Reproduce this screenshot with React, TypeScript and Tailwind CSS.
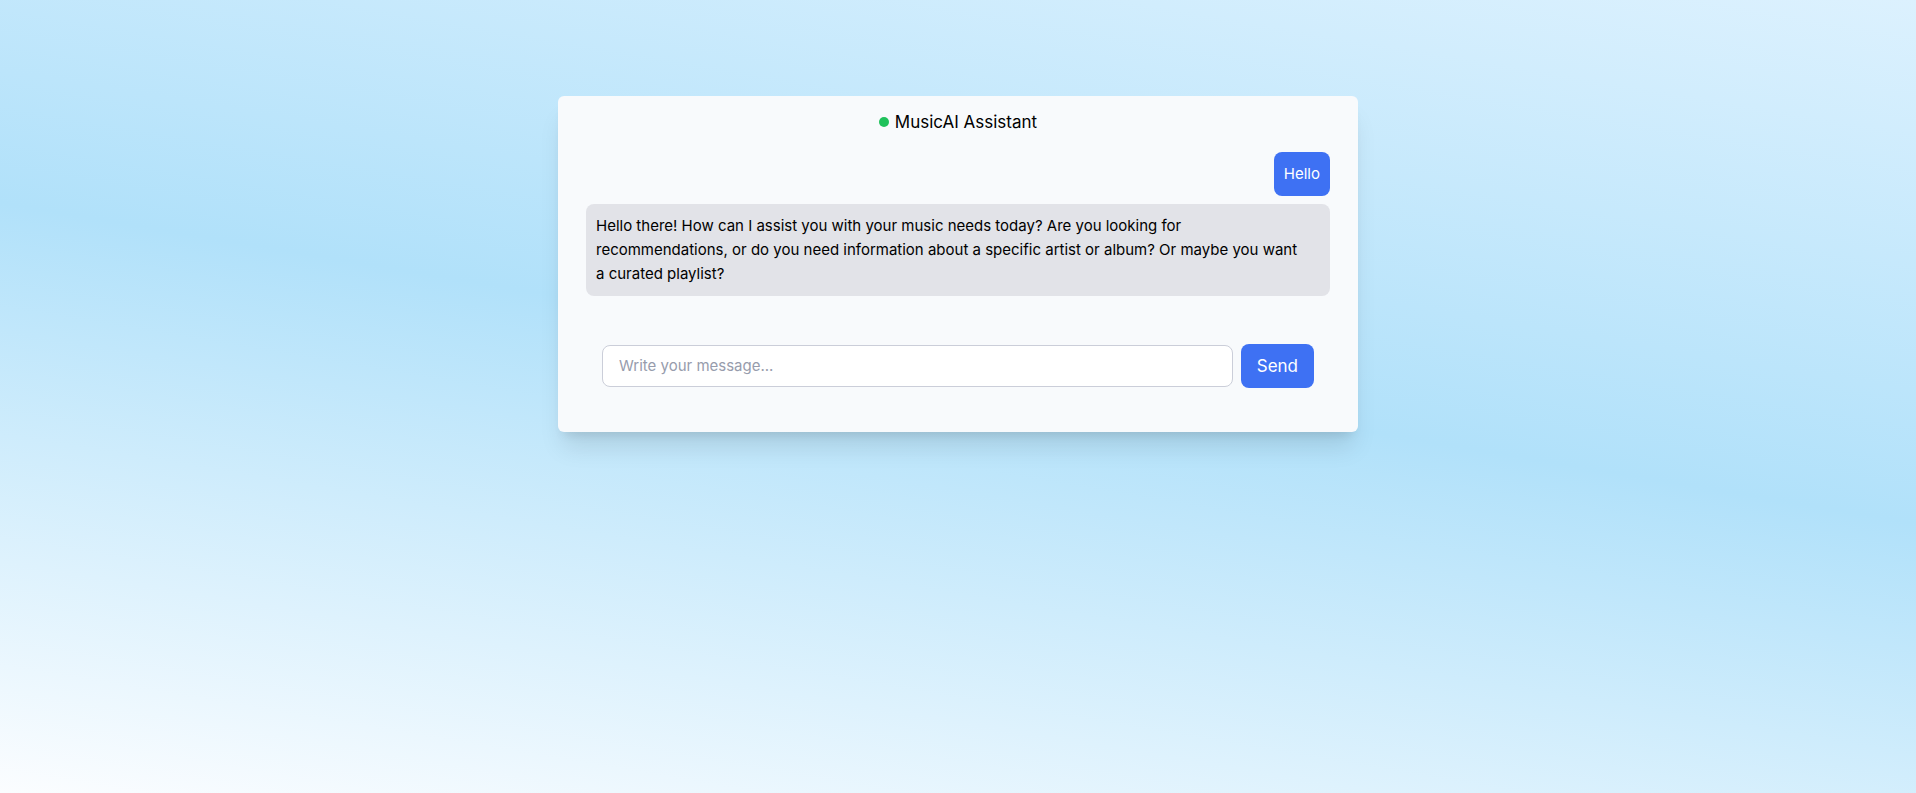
import { useState } from "react";

type Message = { from: "user" | "assistant"; text: string };

const messages: Message[] = [
  { from: "user", text: "Hello" },
  {
    from: "assistant",
    text: "Hello there! How can I assist you with your music needs today? Are you looking for recommendations, or do you need information about a specific artist or album? Or maybe you want a curated playlist?",
  },
];

function Bubble({ from, text }: Message) {
  return from === "user" ? (
    <li className="self-end rounded-lg bg-[#3e71f3] p-2.5 text-white">{text}</li>
  ) : (
    <li className="self-start rounded-lg bg-[#e2e3e8] py-2.5 pr-6 pl-2.5 text-black">{text}</li>
  );
}

export default function App() {
  const [draft, setDraft] = useState("");

  return (
    <div className="min-h-screen bg-[linear-gradient(189.5deg,#dcf1fe_0%,#b1e1fa_47%,#fbfdff_100%)] px-4 pt-24 font-['Inter',sans-serif] text-[15px] leading-6">
      <main className="mx-auto max-w-[800px] rounded-md bg-[#f8fafc] px-7 pt-3 pb-11 shadow-xl">
        <header className="flex items-center justify-center gap-1.5">
          <span className="size-2.5 rounded-full bg-[#1fc15b]" />
          <h1 className="text-[17px] leading-7 text-black">MusicAI Assistant</h1>
        </header>
        <ul className="mt-4 flex flex-col gap-2">
          {messages.map((message) => (
            <Bubble key={message.text} {...message} />
          ))}
        </ul>
        <form
          className="mt-12 flex items-center gap-2 px-4"
          onSubmit={(event) => event.preventDefault()}
        >
          <input
            type="text"
            aria-label="Message"
            placeholder="Write your message..."
            value={draft}
            onChange={(event) => setDraft(event.target.value)}
            className="min-w-0 flex-1 rounded-lg border border-[#cbced9] bg-white px-4 py-2 text-black outline-none placeholder:text-[#979cac]"
          />
          <button
            type="submit"
            className="rounded-lg bg-[#3e71f3] px-4 py-2 text-[17px] leading-7 text-white"
          >
            Send
          </button>
        </form>
      </main>
    </div>
  );
}
